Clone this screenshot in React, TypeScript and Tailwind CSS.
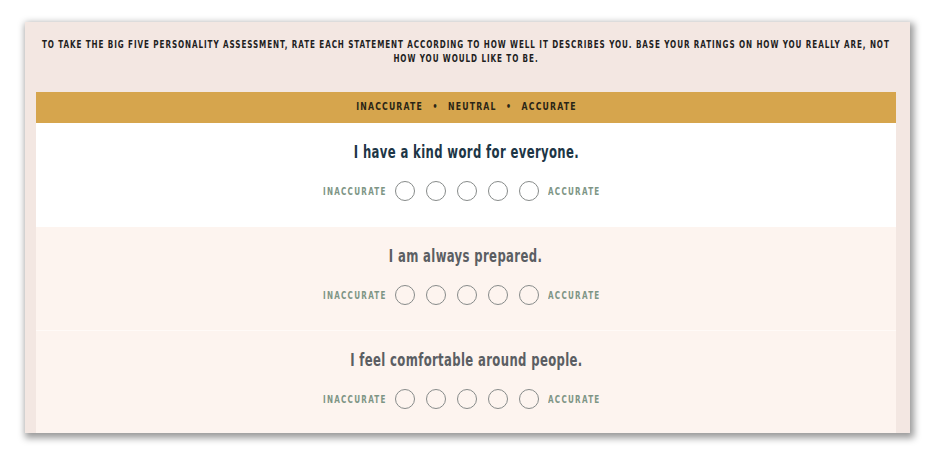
import React from "react";

const statements = [
  { text: "I have a kind word for everyone.", active: true },
  { text: "I am always prepared.", active: false },
  { text: "I feel comfortable around people.", active: false },
];

const font = "font-['DejaVu_Sans_Condensed','DejaVu_Sans',sans-serif] [font-stretch:condensed]";

function Row({ text, active, last }: { text: string; active: boolean; last?: boolean }) {
  return (
    <div
      className={`${active ? "bg-white" : "bg-[#fdf4ef]"} ${last ? "" : "h-[104px]"} shrink-0 flex flex-col items-center pt-[17px] ${
        !active && !last ? "border-b border-[#fffaf7]" : ""
      }`}
    >
      <div
        className={`${font} font-bold text-[18px] leading-[24px] tracking-[0.5px] whitespace-nowrap scale-x-[0.72] ${
          active ? "text-[#1d3646]" : "text-[#5b5e63]"
        }`}
      >
        {text}
      </div>
      <div className="flex items-center mt-[17px]">
        <span className="w-[63px] flex justify-end mr-[8px]">
          <span className={`${font} font-bold text-[10px] tracking-[1.6px] text-[#7d9585] whitespace-nowrap scale-x-[0.8] origin-right`}>
            INACCURATE
          </span>
        </span>
        <div className="flex gap-[11px]">
          {[0, 1, 2, 3, 4].map((i) => (
            <div key={i} className="w-[20px] h-[20px] rounded-full border-[1.7px] border-[#878b8a] bg-transparent" />
          ))}
        </div>
        <span className="w-[60px] flex justify-start ml-[9px]">
          <span className={`${font} font-bold text-[10px] tracking-[1.6px] text-[#7d9585] whitespace-nowrap scale-x-[0.8] origin-left`}>
            ACCURATE
          </span>
        </span>
      </div>
    </div>
  );
}

export default function App() {
  return (
    <div className="w-[936px] h-[460px] bg-white pt-[22px] pl-[25px] overflow-hidden">
      <div className="w-[885px] h-[411px] bg-[#f3e7e2] shadow-[2px_3px_7px_2px_rgba(0,0,0,0.4)] overflow-hidden flex flex-col pl-[11px] pr-[14px]">
        <div className={`h-[70px] shrink-0 pt-[15px] flex flex-col items-center ${font} font-bold text-[10.5px] leading-[14px] tracking-[1.2px] text-[#1e1e1e]`}>
          <span className="whitespace-nowrap scale-x-[0.764]">
            TO TAKE THE BIG FIVE PERSONALITY ASSESSMENT, RATE EACH STATEMENT ACCORDING TO HOW WELL IT DESCRIBES YOU. BASE YOUR RATINGS ON HOW YOU REALLY ARE, NOT
          </span>
          <span className="whitespace-nowrap scale-x-[0.764]">HOW YOU WOULD LIKE TO BE.</span>
        </div>
        <div className="h-[31px] shrink-0 bg-[#d6a54d] flex items-center justify-center">
          <span className={`${font} font-bold text-[11px] tracking-[1.5px] text-[#2a2516] whitespace-nowrap scale-x-[0.785]`}>
            INACCURATE<span className="mx-[12px]">•</span>NEUTRAL<span className="mx-[12px]">•</span>ACCURATE
          </span>
        </div>
        {statements.map((s, i) => (
          <Row key={i} text={s.text} active={s.active} last={i === statements.length - 1} />
        ))}
        <div className="flex-1 bg-[#fdf4ef]" />
      </div>
    </div>
  );
}
